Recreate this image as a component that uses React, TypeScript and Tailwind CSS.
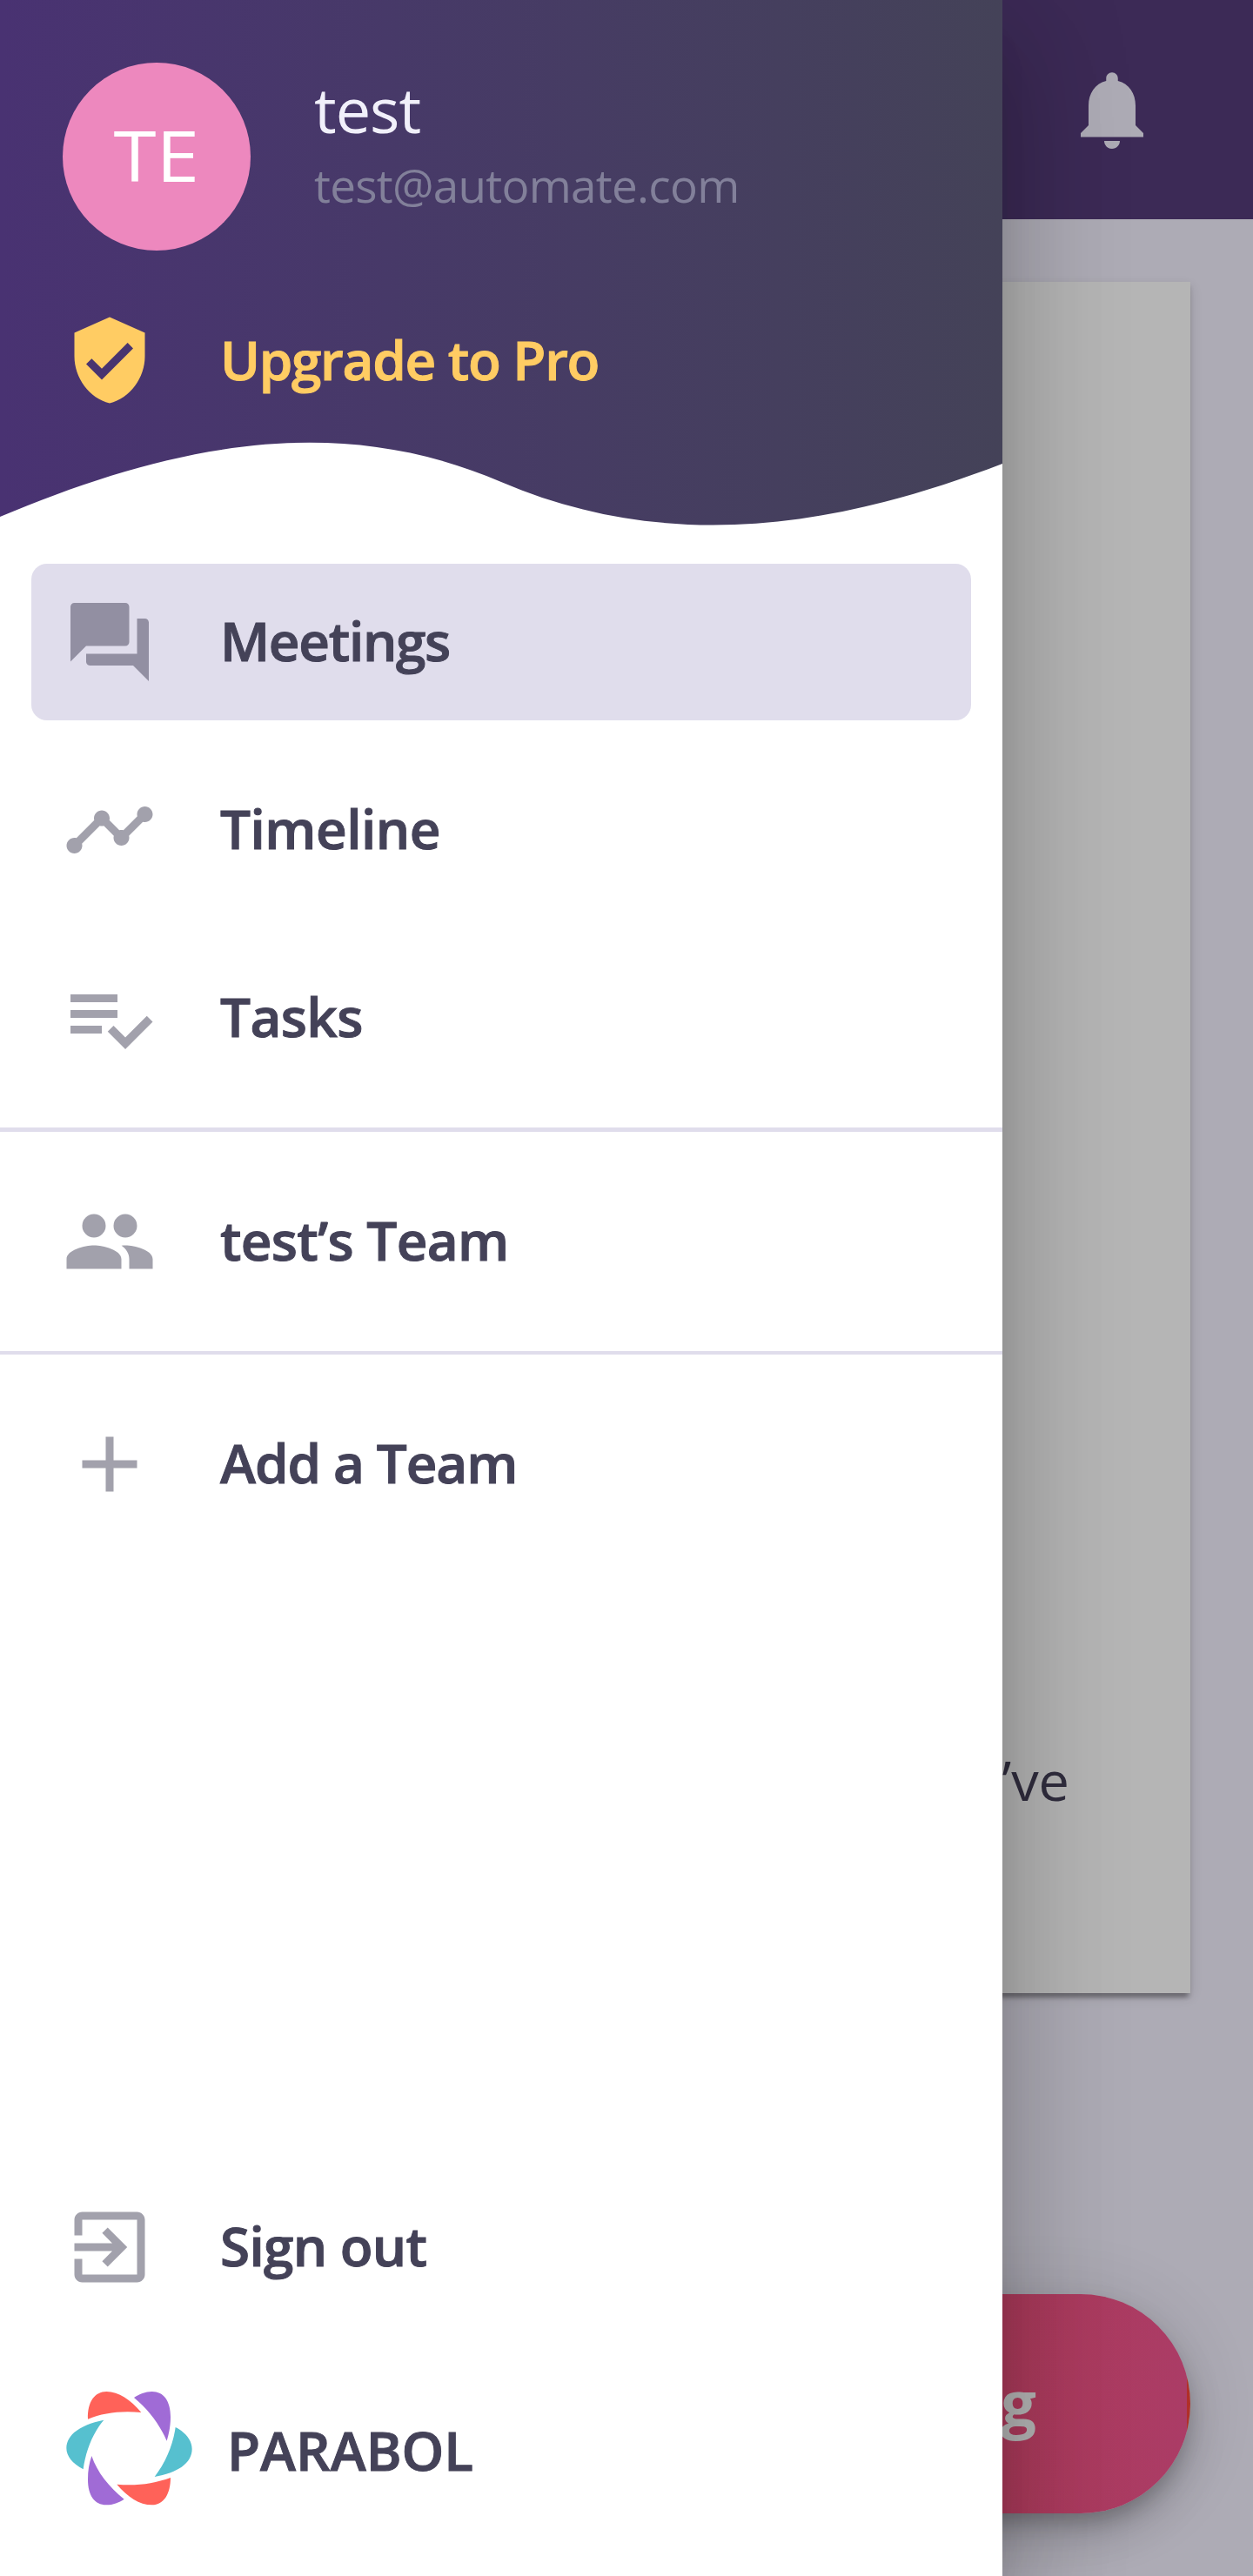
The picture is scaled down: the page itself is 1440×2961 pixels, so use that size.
import type { ReactNode } from 'react'

const icons = {
  shield: 'M12 1L3 5v6c0 5.55 3.84 10.74 9 12 5.16-1.26 9-6.45 9-12V5l-9-4zm-2 16l-4-4 1.41-1.41L10 14.17l6.59-6.59L18 9l-8 8z',
  forum: 'M21 6h-2v9H6v2c0 .55.45 1 1 1h11l4 4V7c0-.55-.45-1-1-1zm-4 6V3c0-.55-.45-1-1-1H3c-.55 0-1 .45-1 1v14l4-4h10c.55 0 1-.45 1-1z',
  timeline:
    'M23 8c0 1.1-.9 2-2 2-.18 0-.35-.02-.51-.07l-3.56 3.55c.05.16.07.34.07.52 0 1.1-.9 2-2 2s-2-.9-2-2c0-.18.02-.36.07-.52l-2.55-2.55c-.16.05-.34.07-.52.07s-.36-.02-.52-.07l-4.55 4.56c.05.16.07.33.07.51 0 1.1-.9 2-2 2s-2-.9-2-2 .9-2 2-2c.18 0 .35.02.51.07l4.56-4.55C8.02 9.36 8 9.18 8 9c0-1.1.9-2 2-2s2 .9 2 2c0 .18-.02.36-.07.52l2.55 2.55c.16-.05.34-.07.52-.07s.36.02.52.07l3.55-3.56C19.02 8.35 19 8.18 19 8c0-1.1.9-2 2-2s2 .9 2 2z',
  tasks: 'M14 10H2v2h12v-2zm0-4H2v2h12V6zM2 16h8v-2H2v2zm19.5-4.5L23 13l-6.99 7-4.51-4.5L13 14l3.01 3 5.49-5.5z',
  team: 'M8 13c-2.33 0-7 1.17-7 3.5V19h14v-2.5c0-2.33-4.67-3.5-7-3.5zM16 13c-.29 0-.62.02-.97.05C16.19 13.89 17 15.02 17 16.5V19h6v-2.5c0-2.33-4.67-3.5-7-3.5zM8 5a3 3 0 1 0 0 6 3 3 0 0 0 0-6zM16 5a3 3 0 1 0 0 6 3 3 0 0 0 0-6z',
  add: 'M19 13h-6v6h-2v-6H5v-2h6V5h2v6h6v2z',
  exit: 'M10.09 15.59L11.5 17l5-5-5-5-1.41 1.41L12.67 11H3v2h9.67l-2.58 2.59zM19 3H5c-1.11 0-2 .9-2 2v4h2V5h14v14H5v-4H3v4c0 1.1.89 2 2 2h14c1.1 0 2-.9 2-2V5c0-1.1-.9-2-2-2z',
  bell: 'M12 22c1.1 0 2-.9 2-2h-4c0 1.1.89 2 2 2zm6-6v-5c0-3.07-1.64-5.64-4.5-6.32V4c0-.83-.67-1.5-1.5-1.5s-1.5.67-1.5 1.5v.68C7.63 5.36 6 7.92 6 11v5l-2 2v1h16v-1l-2-2z',
}

function Icon({ name, className = '' }: { name: keyof typeof icons; className?: string }) {
  return (
    <svg viewBox="0 0 24 24" fill="currentColor" className={`size-[108px] shrink-0 ${className}`}>
      <path d={icons[name]} />
    </svg>
  )
}

function Label({ children, className = '' }: { children: ReactNode; className?: string }) {
  return (
    <span
      className={`whitespace-nowrap text-[62px] font-semibold leading-[90px] [-webkit-text-stroke:1px_currentColor] ${className}`}
    >
      {children}
    </span>
  )
}

interface RowProps {
  icon: keyof typeof icons
  children: ReactNode
  active?: boolean
  tracking?: string
}

function Row({ icon, children, active = false, tracking = '' }: RowProps) {
  return (
    <div className={`mx-9 flex h-[180px] items-center rounded-[18px] pl-9 ${active ? 'bg-[#e0ddec]' : ''}`}>
      <Icon name={icon} className={active ? 'text-[#928fa2]' : 'text-[#a2a1ac]'} />
      <Label className={`mb-[4px] ml-[73px] ${tracking}`}>{children}</Label>
    </div>
  )
}

function Divider() {
  return <div className="my-9 h-[4.5px] bg-[#e0ddec]" />
}

function Logo() {
  return (
    <svg viewBox="45 84 441 398" className="h-[132.7px] w-[147px] shrink-0">
      <g fill="#ff6259">
        <path d="M123 182C121 122 147 87 187 87C229 87 270 115 307 159C238 152 175 160 123 182Z" />
        <path d="M408 384C408 440 385 478 344 478C300 478 260 450 223 407C290 413 350 405 408 384Z" />
      </g>
      <g fill="#a06bd6">
        <path d="M282 108C300 96 321 87 344 87C385 87 408 120 408 175C408 205 403 230 395 257C370 200 333 150 282 108Z" />
        <path d="M136 309C155 365 195 415 248 458C230 470 210 478 187 478C145 478 123 444 123 390C123 360 127 335 136 309Z" />
      </g>
      <g fill="#56c0cf">
        <path d="M425 210C460 228 482 255 482 285C482 335 430 368 353 381C391 332 417 270 425 210Z" />
        <path d="M178 185C140 230 116 290 107 355C70 335 49 310 49 282C49 235 100 200 178 185Z" />
      </g>
    </svg>
  )
}

function Sidebar() {
  return (
    <aside className="absolute inset-y-0 left-0 flex w-[1152px] flex-col bg-white text-[#444258] shadow-[0_36px_45px_-22.5px_rgba(0,0,0,0.2),0_72px_108px_9px_rgba(0,0,0,0.14),0_27px_135px_22.5px_rgba(0,0,0,0.12)]">
      <header className="relative h-[612px] shrink-0 bg-linear-to-r from-[#493272] to-[#444258]">
        <svg viewBox="0 0 1152 112" className="absolute bottom-0 left-0 h-[112px] w-full">
          <path fill="#fff" d="M0 94C192 13 384-29 576 54C768 136 960 107 1152 33V112H0Z" />
        </svg>
        <div className="flex items-start pl-[72px] pt-[72px]">
          <div className="flex size-[216px] items-center justify-center rounded-full bg-[#ed88be] pb-[6px] text-[81px] leading-none text-white">
            <span className="scale-x-110">TE</span>
          </div>
          <div className="ml-[73px] pt-[3px]">
            <div className="text-[72px] leading-[100px] tracking-[-1px] text-[#f1f0fa]">test</div>
            <div className="mt-[2px] text-[53px] leading-[72px] tracking-[-0.7px] text-[#82809a]">
              test@automate.com
            </div>
          </div>
        </div>
        <div className="relative mt-[36px] flex h-[180px] items-center pl-[72px] text-[#ffcc63]">
          <Icon name="shield" />
          <Label className="mb-[3px] ml-[73px] tracking-[-1.3px]">Upgrade to Pro</Label>
        </div>
      </header>
      <nav className="flex flex-1 flex-col pt-9">
        <div className="flex flex-col gap-9">
          <Row icon="forum" active tracking="tracking-[-1.3px]">
            Meetings
          </Row>
          <Row icon="timeline" tracking="tracking-[-0.5px]">
            Timeline
          </Row>
          <Row icon="tasks" tracking="tracking-[-0.6px]">
            Tasks
          </Row>
        </div>
        <Divider />
        <Row icon="team" tracking="tracking-[-0.7px]">
          test’s Team
        </Row>
        <Divider />
        <Row icon="add" tracking="tracking-[-1.1px]">
          Add a Team
        </Row>
      </nav>
      <footer className="pb-[81px]">
        <Row icon="exit" tracking="tracking-[-0.7px]">
          Sign out
        </Row>
        <div className="mt-[75px] flex h-[132px] items-center pl-[75px]">
          <Logo />
          <Label className="ml-[39px] mt-[4px]">PARABOL</Label>
        </div>
      </footer>
    </aside>
  )
}

export default function App() {
  return (
    <div className="relative flex h-[2961px] w-[1440px] flex-col overflow-hidden bg-[#adabb5] font-['Open_Sans',sans-serif]">
      <div className="flex h-[252px] shrink-0 items-center justify-end bg-[#3c2a56] pr-[108px]">
        <Icon name="bell" className="text-[#adabb5]" />
      </div>
      <main className="flex flex-1 flex-col items-end px-[72px] pt-[72px]">
        <section className="flex h-[1967px] w-full items-end justify-end bg-[#b5b5b5] pb-[200px] pr-[139px] shadow-[0_9px_4.5px_-4.5px_rgba(0,0,0,0.2),0_4.5px_4.5px_rgba(0,0,0,0.14),0_4.5px_13.5px_rgba(0,0,0,0.12)]">
          <p className="text-[63px] leading-[90px] text-[#302d3e]">’ve</p>
        </section>
        <button className="mt-[346px] flex h-[252px] w-[1000px] items-center justify-end rounded-full border-[4.5px] border-transparent bg-linear-to-r from-[#b03028] to-[#ab3c66] pb-[4px] pr-[173px] text-[72px] font-bold text-[#b5b5b5] shadow-[0_13.5px_22.5px_-4.5px_rgba(0,0,0,0.2),0_27px_45px_rgba(0,0,0,0.14),0_4.5px_81px_rgba(0,0,0,0.12)]">
          g
        </button>
      </main>
      <Sidebar />
    </div>
  )
}
